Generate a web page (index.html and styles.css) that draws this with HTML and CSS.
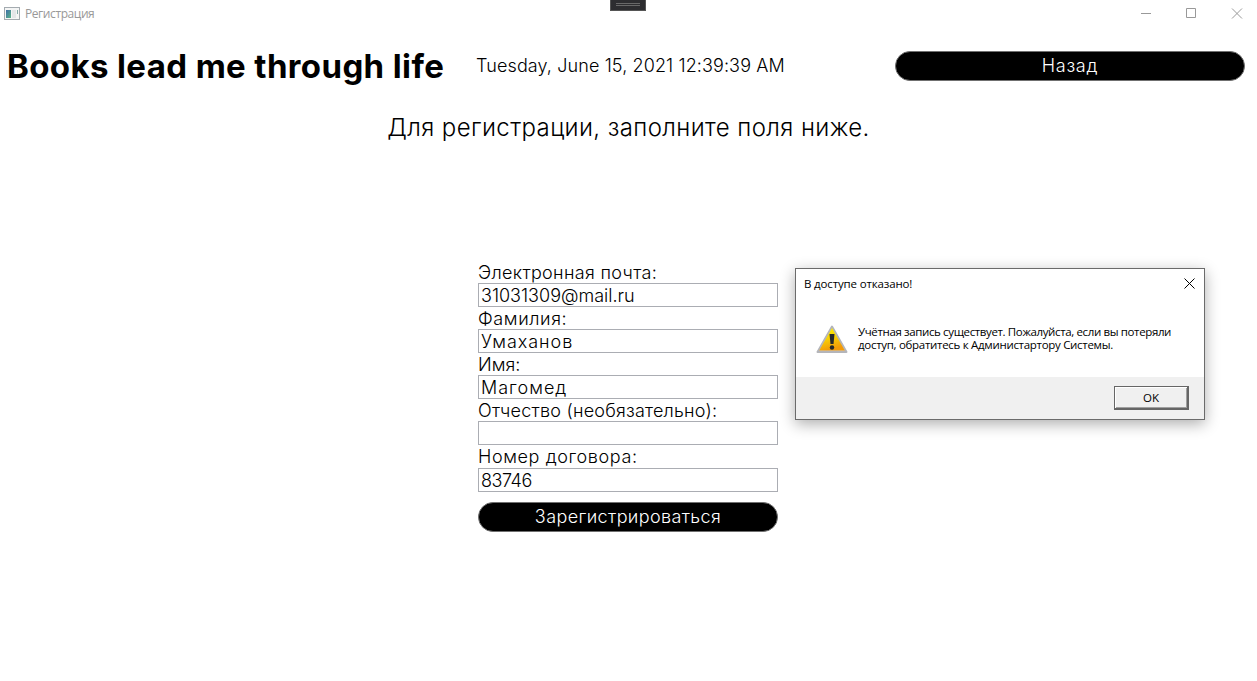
FILE: index.html
```html
<!DOCTYPE html>
<html lang="ru">
<head>
<meta charset="utf-8">
<title>Регистрация</title>
<link rel="stylesheet" href="styles.css">
</head>
<body>
<div class="window">
  <header class="titlebar">
    <svg class="app-icon" width="16" height="14" viewBox="0 0 16 14"><defs><linearGradient id="pane" x2="1" y2="1"><stop stop-color="#3f6fa8"/><stop offset="1" stop-color="#59b487"/></linearGradient></defs><rect x=".5" y=".5" width="15" height="12" fill="#f4f5f5" stroke="#a4abb0"/><rect x="2" y="3" width="5" height="8" fill="url(#pane)"/><rect x="8" y="3" width="4" height="8" fill="#e3e6e8"/><rect x="13" y="3" width="1" height="4" fill="#83aaa8"/></svg>
    <span class="caption">Регистрация</span>
    <svg class="controls" width="103" height="12" viewBox="0 0 103 12"><path d="M1 5.5h10M46.500 .500h9v9h-9zM92 .5l10 10M102 .5L92 10.500"/></svg>
  </header>
  <div class="debug-tab"><i></i></div>
  <div class="top">
    <h1><span>Books lead me through life</span></h1>
    <time><span>Tuesday, June 15, 2021 12:39:39 AM</span></time>
    <button class="pill back"><span>Назад</span></button>
  </div>
  <h2><span>Для регистрации, заполните поля ниже.</span></h2>
  <form class="form">
    <label><span class="l1">Электронная почта:</span></label>
    <div class="field"><span class="f1">31031309@mail.ru</span></div>
    <label><span class="l2">Фамилия:</span></label>
    <div class="field"><span class="f2">Умаханов</span></div>
    <label><span class="l3">Имя:</span></label>
    <div class="field"><span class="f3">Магомед</span></div>
    <label><span class="l4">Отчество (необязательно):</span></label>
    <div class="field"></div>
    <label class="last"><span class="l5">Номер договора:</span></label>
    <div class="field"><span class="f5">83746</span></div>
    <button type="button" class="pill submit"><span>Зарегистрироваться</span></button>
  </form>
  <section class="dialog">
    <div class="dialog-title"><span>В доступе отказано!</span>
      <svg width="11" height="11" viewBox="0 0 11 11"><path d="M.5.5l10 10M10.500.500l-10 10" stroke="#000" fill="none"/></svg></div>
    <div class="dialog-body">
      <svg class="warn" width="32" height="29" viewBox="0 0 32 29"><defs><linearGradient id="sun" x2=".3" y2="1"><stop stop-color="#fff200"/><stop offset=".5" stop-color="#f8d307"/><stop offset="1" stop-color="#f29a08"/></linearGradient></defs><path d="M16 1.500L30.500 27h-29z" fill="#c9c9cf" stroke="#b4b5ba" stroke-width="2" stroke-linejoin="round"/><path d="M16 3L28.800 25.500H3.200z" fill="url(#sun)"/><path d="M13.500 9h5l-1 10h-3z" fill="#25282c"/><circle cx="16" cy="22.500" r="2.200" fill="#25282c"/></svg>
      <p><span class="m1">Учётная запись существует. Пожалуйста, если вы потеряли</span><br><span class="m2">доступ, обратитесь к Администартору Системы.</span></p>
    </div>
    <div class="dialog-actions"><button class="ok"><span>OK</span></button></div>
  </section>
</div>
</body>
</html>
```
FILE: styles.css
```css
* { box-sizing: border-box; }
body { margin: 0; background: #fff; color: #000; font: 300 18px/22px Inter, "Open Sans", sans-serif; }
.window { position: relative; width: 1257px; height: 681px; overflow: hidden; }
span { white-space: nowrap; }
button { padding: 0; font: inherit; }
.titlebar { height: 27px; display: flex; align-items: center; padding: 0 14px 0 4px; }
.caption { margin-left: 5px; flex: 1; color: #999; font: 400 12px/16px "Open Sans", sans-serif; letter-spacing: -.42px; }
.controls { fill: none; stroke: #999; }
.debug-tab { position: absolute; left: 610px; top: 0; width: 36px; height: 11px; background: #2d2d30; border: 1px solid #555; border-top: 0; }
.debug-tab i { display: block; width: 24px; height: 3px; margin: 3px 5px; border: 1px solid #686868; border-width: 1px 0; }
.top { display: grid; grid-template-columns: 469px 419px 350px; align-items: center; height: 78px; padding-left: 7px; }
h1 { margin: 0; font: 700 33px/40px Inter, sans-serif; letter-spacing: .38px; }
time { letter-spacing: .11px; }
.pill { height: 30px; border: 1px solid #707070; border-radius: 15px; background: #000; color: #fff; text-align: center; line-height: 28px; }
.back { letter-spacing: .7px; }
h2 { margin: 8px 0 0; font-weight: 300; font-size: 24px; line-height: 30px; text-align: center; letter-spacing: .4px; }
.form { width: 300px; margin: 118px 0 0 478px; display: flex; flex-direction: column; }
label { height: 22px; line-height: 24px; }
label.last { height: 23px; }
.field { height: 24px; border: 1px solid #abadb3; padding-left: 2px; line-height: 23px; }
.l1 { letter-spacing: .33px; }
.l2 { letter-spacing: .6px; }
.f2 { letter-spacing: .95px; }
.f3 { letter-spacing: 1px; }
.l4 { letter-spacing: .22px; }
.l5 { letter-spacing: .6px; }
.f5 { letter-spacing: -.45px; }
.submit { margin-top: 10px; letter-spacing: .38px; }
.dialog { position: absolute; left: 795px; top: 268px; width: 410px; height: 152px; border: 1px solid #6b6b6b; background: #fff; box-shadow: 0 4px 14px rgba(0,0,0,.32); font: 400 11.5px/13px "Open Sans", sans-serif; }
.dialog-title { height: 28px; display: flex; align-items: center; justify-content: space-between; padding: 0 9px 0 8px; letter-spacing: -.15px; }
.dialog-body { height: 80px; display: flex; padding: 28px 0 0 20px; gap: 10px; }
.dialog-body p { margin: 0; }
.m1 { letter-spacing: -.37px; }
.m2 { letter-spacing: -.3px; }
.dialog-actions { height: 42px; background: #f0f0f0; display: flex; justify-content: flex-end; padding: 9px 15px 0; }
.ok { width: 75px; height: 24px; border: 1px solid #666; border-width: 1px 2px 2px 1px; background: #f0f0f0; box-shadow: inset 1px 1px #fff, inset -1px -1px #a0a0a0; color: #000; }
```
